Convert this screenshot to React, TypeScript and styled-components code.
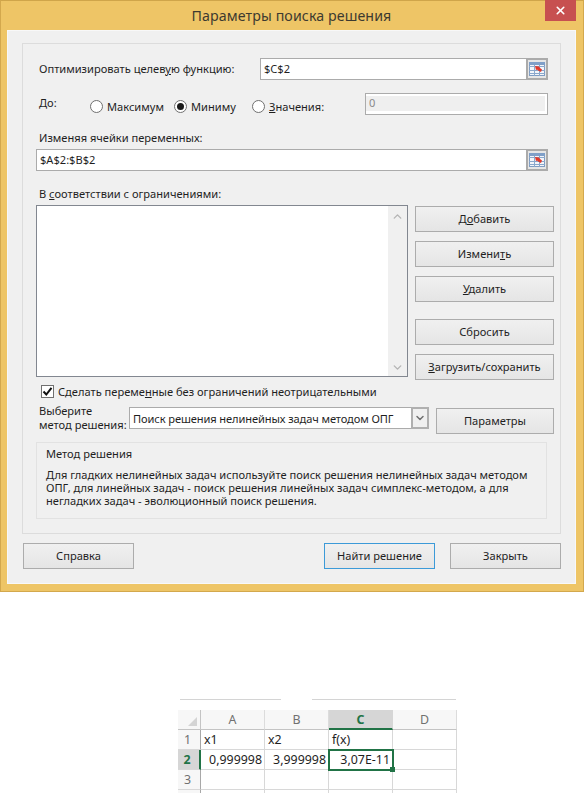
import React from "react";
import styled, { createGlobalStyle } from "styled-components";
import { ChevronDown, ChevronUp, X } from "lucide-react";

const Global = createGlobalStyle`
  html, body {
    margin: 0;
    padding: 0;
    background: #fff;
  }
  body {
    font-family: "Noto Sans", "Open Sans", sans-serif;
    font-size: 11.1px;
    color: #1f1f1f;
  }
`;

const Page = styled.div`
  width: 584px;
  height: 793px;
  overflow: hidden;
`;

const Window = styled.div`
  height: 592px;
  box-sizing: border-box;
  background: #eec566;
  border: 1px solid #d3a84d;
  border-top-color: #cfa54a;
  display: flex;
  flex-direction: column;
  padding: 0 7px 7px 6px;
`;

const TitleBar = styled.div`
  position: relative;
  height: 29px;
  flex: none;
  display: flex;
  align-items: center;
  justify-content: center;
  font-size: 14.2px;
  color: #3d3a30;
  letter-spacing: 0.1px;
`;

const CloseButton = styled.div`
  position: absolute;
  top: -1px;
  right: 0;
  width: 31px;
  height: 21px;
  background: #c75050;
  display: flex;
  align-items: center;
  justify-content: center;
  color: #fff;
`;

const Client = styled.div`
  flex: 1;
  background: #f0f0f0;
  border: 1px solid #f8f8f8;
  padding: 12px 14px 0;
`;

const Panel = styled.div`
  height: 491px;
  box-sizing: border-box;
  border: 1px solid #dcdcdc;
  padding: 14px 6px 0 13px;
`;

const Row = styled.div<{ $top?: number; $height?: number }>`
  display: flex;
  align-items: center;
  margin-top: ${(p) => p.$top ?? 0}px;
  height: ${(p) => (p.$height ? `${p.$height}px` : "auto")};
`;

const Label = styled.div<{ $top?: number; $width?: number; $lift?: number }>`
  padding-left: 3px;
  margin-top: ${(p) => p.$top ?? 0}px;
  margin-bottom: ${(p) => p.$lift ?? 0}px;
  line-height: 16px;
  flex: none;
  width: ${(p) => (p.$width ? `${p.$width}px` : "auto")};
  box-sizing: border-box;
`;

const Field = styled.div<{ $width?: number }>`
  position: relative;
  box-sizing: border-box;
  width: ${(p) => (p.$width ? `${p.$width}px` : "512px")};
  height: 22px;
  background: #fff;
  border: 1px solid #ababab;
  padding-left: 3px;
  line-height: 20px;
  display: flex;
  align-items: center;
`;

const PickerButton = styled.div`
  position: absolute;
  right: -1px;
  top: -1px;
  width: 22px;
  height: 22px;
  box-sizing: border-box;
  background: #e6e6e6;
  border: 2px solid #ababab;
  display: flex;
  align-items: center;
  justify-content: center;
`;

const RadioGroup = styled.div<{ $left: number; $width: number }>`
  display: flex;
  align-items: center;
  gap: 4px;
  flex: none;
  width: ${(p) => p.$width}px;
  margin-left: ${(p) => p.$left}px;
  margin-top: 5px;
`;

const RadioDot = styled.span<{ $checked?: boolean }>`
  width: 13px;
  height: 13px;
  box-sizing: border-box;
  flex: none;
  border-radius: 50%;
  border: 1px solid #707070;
  background: #fff;
  display: flex;
  align-items: center;
  justify-content: center;
  &::after {
    content: "";
    display: ${(p) => (p.$checked ? "block" : "none")};
    width: 7px;
    height: 7px;
    border-radius: 50%;
    background: #1a1a1a;
  }
`;

const ValueField = styled.div`
  box-sizing: border-box;
  width: 183px;
  height: 22px;
  border: 1px solid #ababab;
  background: #fff;
  padding: 2px 2px 3px 0;
  margin-left: auto;
  margin-right: 6px;
`;

const ValueInner = styled.div`
  height: 100%;
  background: #efefef;
  color: #8a8a8a;
  padding-left: 3px;
  line-height: 13px;
`;

const ConstraintArea = styled.div`
  display: flex;
  gap: 7px;
  margin-top: 3px;
`;

const ListBox = styled.div`
  width: 372px;
  height: 172px;
  box-sizing: border-box;
  border: 1px solid #828790;
  background: #fff;
  display: flex;
  justify-content: flex-end;
`;

const ScrollTrack = styled.div`
  width: 19px;
  background: #f0f0f0;
  display: flex;
  flex-direction: column;
  justify-content: space-between;
  align-items: center;
  padding: 4px 0 2px;
  color: #b4b4b4;
`;

const ButtonColumn = styled.div`
  display: flex;
  flex-direction: column;
  padding-top: 1px;
`;

const Button = styled.div<{ $width: number; $top?: number; $left?: number; $primary?: boolean }>`
  box-sizing: border-box;
  flex: none;
  width: ${(p) => p.$width}px;
  height: 26px;
  padding-bottom: 2px;
  margin-top: ${(p) => p.$top ?? 0}px;
  margin-left: ${(p) => p.$left ?? 0}px;
  border: 1px solid ${(p) => (p.$primary ? "#3c9ad8" : "#acacac")};
  background: linear-gradient(#f0f0f0, #e5e5e5);
  display: flex;
  align-items: center;
  justify-content: center;
  color: #1f1f1f;
`;

const CheckRow = styled.div`
  display: flex;
  align-items: center;
  gap: 4px;
  padding-left: 5px;
  height: 16px;
  margin-top: 3px;
`;

const CheckBox = styled.span`
  width: 13px;
  height: 13px;
  box-sizing: border-box;
  border: 1px solid #707070;
  background: #fff;
  display: flex;
  align-items: center;
  justify-content: center;
`;

const MethodRow = styled.div`
  display: flex;
  margin-top: 8px;
`;

const MethodLabel = styled.div`
  width: 93px;
  flex: none;
  box-sizing: border-box;
  margin-top: -3px;
  padding-left: 3px;
  line-height: 14px;
  white-space: nowrap;
`;

const Select = styled.div`
  box-sizing: border-box;
  width: 300px;
  height: 22px;
  border: 1px solid #ababab;
  background: #fff;
  padding-left: 3px;
  display: flex;
  align-items: center;
  justify-content: space-between;
  white-space: nowrap;
  letter-spacing: -0.1px;
`;

const SelectArrow = styled.span`
  box-sizing: border-box;
  width: 18px;
  height: 22px;
  margin: -1px -1px -1px 0;
  border: 2px solid #b0b0b0;
  background: #f0f0f0;
  color: #707070;
  display: flex;
  align-items: center;
  justify-content: center;
`;

const MethodBox = styled.div`
  box-sizing: border-box;
  width: 511px;
  height: 77px;
  margin-top: 8px;
  border: 1px solid #e2e2e2;
  padding: 4px 9px;
  line-height: 13px;
`;

const MethodTitle = styled.div`
  margin-bottom: 7px;
  line-height: 14px;
`;

const Footer = styled.div`
  display: flex;
  justify-content: space-between;
  margin-top: 9px;
  padding-left: 1px;
`;

const FooterRight = styled.div`
  display: flex;
  gap: 15px;
`;

const Sheet = styled.div`
  margin: 107px 0 0 178px;
  width: 279px;
`;

const TopLines = styled.div`
  display: flex;
  gap: 31px;
  padding-left: 2px;
  margin-bottom: 10px;
`;

const TopLine = styled.div<{ $width: number }>`
  width: ${(p) => p.$width}px;
  height: 1px;
  background: #d4d4d4;
`;

const Grid = styled.div`
  display: grid;
  grid-template-columns: 23px 64px 64px 64px 64px;
  grid-auto-rows: 20px;
  font-size: 12.4px;
`;

const Corner = styled.div`
  background: #f7f7f7;
  border-right: 1px solid #c4c4c4;
  border-bottom: 1px solid #c4c4c4;
  position: relative;
  &::after {
    content: "";
    position: absolute;
    right: 3px;
    bottom: 3px;
    border-style: solid;
    border-width: 0 0 9px 9px;
    border-color: transparent transparent #d4d4d4 transparent;
  }
`;

const ColHead = styled.div<{ $active?: boolean }>`
  box-sizing: border-box;
  background: ${(p) => (p.$active ? "#d6d6d6" : "#f7f7f7")};
  border-right: 1px solid ${(p) => (p.$active ? "#d6d6d6" : "#dcdcdc")};
  border-bottom: ${(p) => (p.$active ? "2px solid #217346" : "1px solid #c4c4c4")};
  color: ${(p) => (p.$active ? "#217346" : "#707070")};
  font-weight: ${(p) => (p.$active ? 700 : 400)};
  display: flex;
  align-items: center;
  justify-content: center;
`;

const RowHead = styled.div<{ $active?: boolean }>`
  box-sizing: border-box;
  background: ${(p) => (p.$active ? "#d6d6d6" : "#f7f7f7")};
  border-right: ${(p) => (p.$active ? "2px solid #217346" : "1px solid #a8a8a8")};
  border-bottom: 1px solid #d8d8d8;
  color: ${(p) => (p.$active ? "#217346" : "#707070")};
  font-weight: ${(p) => (p.$active ? 700 : 400)};
  display: flex;
  align-items: center;
  justify-content: center;
  padding-right: 3px;
`;

const Cell = styled.div<{ $right?: boolean; $selected?: boolean }>`
  position: relative;
  box-sizing: border-box;
  border-right: 1px solid #d8d8d8;
  border-bottom: 1px solid #d8d8d8;
  padding: 0 2px 0 3px;
  display: flex;
  align-items: center;
  justify-content: ${(p) => (p.$right ? "flex-end" : "flex-start")};
  white-space: nowrap;
  ${(p) => p.$selected && "outline: 2px solid #217346; outline-offset: -1px; z-index: 1;"}
`;

const FillHandle = styled.span`
  position: absolute;
  right: -3px;
  bottom: -3px;
  width: 5px;
  height: 5px;
  background: #217346;
`;

const PickerIcon = () => (
  <svg width="16" height="14" viewBox="0 0 16 14">
    <rect x="0.5" y="0.5" width="15" height="13" fill="#f2f5fa" stroke="#7f9cc2" />
    <path d="M0 4.5h16M0 8.5h16M0 11.5h16M5.5 3v11M10.5 3v11" stroke="#8aa8cc" strokeWidth="1" />
    <rect x="0" y="0" width="16" height="3" fill="#7f9fc8" />
    <path d="M6 4l4 .5 1 1.5 2 1.5-1 2.5-2.5-1.2-1.5-1.3-1 .8z" fill="#e0392c" />
  </svg>
);

const CheckMark = () => (
  <svg width="11" height="11" viewBox="0 0 11 11">
    <path d="M1.5 5.5l2.8 3L9.5 1.8" fill="none" stroke="#111" strokeWidth="2" />
  </svg>
);

export default function App() {
  return (
    <Page>
      <Global />
      <Window>
        <TitleBar>
          Параметры поиска решения
          <CloseButton>
            <X size={13} strokeWidth={3} />
          </CloseButton>
        </TitleBar>
        <Client>
          <Panel>
            <Row $height={22}>
              <Label $width={224}>
                Оптимизировать целев<u>у</u>ю функцию:
              </Label>
              <Field $width={288}>
                $C$2
                <PickerButton>
                  <PickerIcon />
                </PickerButton>
              </Field>
            </Row>
            <Row $top={13} $height={22}>
              <Label $width={29} $lift={2}>
                До:
              </Label>
              <RadioGroup $left={25} $width={84}>
                <RadioDot />
                Максимум
              </RadioGroup>
              <RadioGroup $left={0} $width={78}>
                <RadioDot $checked />
                Миниму
              </RadioGroup>
              <RadioGroup $left={0} $width={80}>
                <RadioDot />
                <span>
                  <u>З</u>начения:
                </span>
              </RadioGroup>
              <ValueField>
                <ValueInner>0</ValueInner>
              </ValueField>
            </Row>
            <Label $top={15}>Изменяя ячейки переменных:</Label>
            <Row $top={3}>
              <Field>
                $A$2:$B$2
                <PickerButton>
                  <PickerIcon />
                </PickerButton>
              </Field>
            </Row>
            <Label $top={15}>
              В <u>с</u>оответствии с ограничениями:
            </Label>
            <ConstraintArea>
              <ListBox>
                <ScrollTrack>
                  <ChevronUp size={13} strokeWidth={2.5} />
                  <ChevronDown size={13} strokeWidth={2.5} />
                </ScrollTrack>
              </ListBox>
              <ButtonColumn>
                <Button $width={139}>
                  <span>
                    Д<u>о</u>бавить
                  </span>
                </Button>
                <Button $width={139} $top={9}>
                  <span>
                    Измени<u>т</u>ь
                  </span>
                </Button>
                <Button $width={139} $top={9}>
                  <span>
                    <u>У</u>далить
                  </span>
                </Button>
                <Button $width={139} $top={17}>
                  Сбросить
                </Button>
                <Button $width={139} $top={9}>
                  <span>
                    <u>З</u>агрузить/сохранить
                  </span>
                </Button>
              </ButtonColumn>
            </ConstraintArea>
            <CheckRow>
              <CheckBox>
                <CheckMark />
              </CheckBox>
              <span>
                Сделать переме<u>н</u>ные без ограничений неотрицательными
              </span>
            </CheckRow>
            <MethodRow>
              <MethodLabel>
                Выберите
                <br />
                метод решения:
              </MethodLabel>
              <Select>
                Поиск решения нелинейных задач методом ОПГ
                <SelectArrow>
                  <ChevronDown size={12} strokeWidth={3} />
                </SelectArrow>
              </Select>
              <Button $width={118} $top={1} $left={7}>
                Параметры
              </Button>
            </MethodRow>
            <MethodBox>
              <MethodTitle>Метод решения</MethodTitle>
              Для гладких нелинейных задач используйте поиск решения нелинейных задач методом
              <br />
              ОПГ, для линейных задач - поиск решения линейных задач симплекс-методом, а для
              <br />
              негладких задач - эволюционный поиск решения.
            </MethodBox>
          </Panel>
          <Footer>
            <Button $width={111}>Справка</Button>
            <FooterRight>
              <Button $width={111} $primary>
                Найти решение
              </Button>
              <Button $width={111}>Закрыть</Button>
            </FooterRight>
          </Footer>
        </Client>
      </Window>
      <Sheet>
        <TopLines>
          <TopLine $width={101} />
          <TopLine $width={144} />
        </TopLines>
        <Grid>
          <Corner />
          <ColHead>A</ColHead>
          <ColHead>B</ColHead>
          <ColHead $active>C</ColHead>
          <ColHead>D</ColHead>
          <RowHead>1</RowHead>
          <Cell>x1</Cell>
          <Cell>x2</Cell>
          <Cell>f(x)</Cell>
          <Cell />
          <RowHead $active>2</RowHead>
          <Cell $right>0,999998</Cell>
          <Cell $right>3,999998</Cell>
          <Cell $right $selected>
            3,07E-11
            <FillHandle />
          </Cell>
          <Cell />
          <RowHead>3</RowHead>
          <Cell />
          <Cell />
          <Cell />
          <Cell />
          <RowHead />
          <Cell />
          <Cell />
          <Cell />
          <Cell />
        </Grid>
      </Sheet>
    </Page>
  );
}
